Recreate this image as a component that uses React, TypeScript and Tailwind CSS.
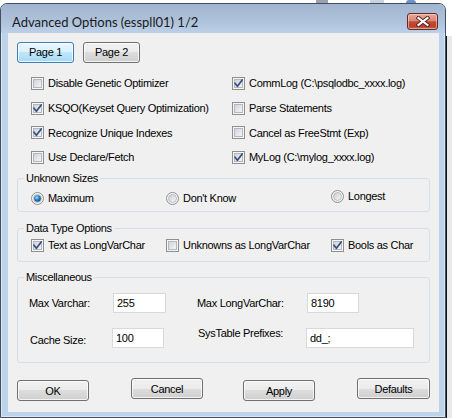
import React from 'react';

const ui = "font-['Liberation_Sans',Arial,sans-serif] text-[11px] tracking-[-0.3px] text-black";

const CheckBox: React.FC<{ checked?: boolean }> = ({ checked }) => (
  <svg width="13" height="13" viewBox="0 0 13 13" className="shrink-0">
    <defs>
      <linearGradient id="cbFill" x1="0" y1="0" x2="1" y2="1">
        <stop offset="0" stopColor="#cdd1d7" />
        <stop offset="1" stopColor="#f7f7f7" />
      </linearGradient>
    </defs>
    <rect x="0.5" y="0.5" width="12" height="12" fill="#f6f6f6" stroke="#8e8f8f" />
    <rect x="2.5" y="2.5" width="8" height="8" fill="url(#cbFill)" stroke="#b4b8be" />
    {checked && (
      <path d="M3 6.3 L5.4 9.2 L10.2 3" fill="none" stroke="#3b5185" strokeWidth="1.8" strokeLinecap="round" strokeLinejoin="round" />
    )}
  </svg>
);

const Radio: React.FC<{ checked?: boolean }> = ({ checked }) => (
  <svg width="13" height="13" viewBox="0 0 13 13" className="shrink-0">
    <defs>
      <linearGradient id="rbFill" x1="0" y1="0" x2="1" y2="1">
        <stop offset="0" stopColor="#c9ced4" />
        <stop offset="1" stopColor="#f8f8f8" />
      </linearGradient>
      <radialGradient id="rbDot" cx="0.4" cy="0.35" r="0.7">
        <stop offset="0" stopColor="#a8e2fb" />
        <stop offset="0.45" stopColor="#2f8bd0" />
        <stop offset="1" stopColor="#0f3f74" />
      </radialGradient>
    </defs>
    <circle cx="6.5" cy="6.5" r="6" fill="#f6f6f6" stroke="#8e8f8f" />
    <circle cx="6.5" cy="6.5" r="4" fill="url(#rbFill)" stroke="#b9bdc2" />
    {checked && <circle cx="6.5" cy="6.5" r="3.3" fill="url(#rbDot)" />}
  </svg>
);

const Opt: React.FC<{ label: string; checked?: boolean }> = ({ label, checked }) => (
  <div className="flex items-center gap-[4px] h-[13px] whitespace-nowrap">
    <CheckBox checked={checked} />
    <span>{label}</span>
  </div>
);

const RadioOpt: React.FC<{ label: string; checked?: boolean; className?: string }> = ({ label, checked, className }) => (
  <div className={`flex items-center gap-[4px] h-[13px] whitespace-nowrap ${className ?? ''}`}>
    <Radio checked={checked} />
    <span>{label}</span>
  </div>
);

const Button: React.FC<{ children: React.ReactNode; className?: string; hot?: boolean }> = ({ children, className, hot }) => (
  <div
    className={`flex items-center justify-center h-[21px] rounded-[3px] border shadow-[inset_0_0_0_1px_rgba(255,255,255,0.75)] ${
      hot
        ? 'border-[#3c7fb1] bg-[linear-gradient(to_bottom,#eaf6fd_0%,#d9f0fc_50%,#bee6fd_50%,#a7d9f5_100%)]'
        : 'border-[#707070] bg-[linear-gradient(to_bottom,#f2f2f2_0%,#ebebeb_50%,#dddddd_50%,#cfcfcf_100%)]'
    } ${className ?? ''}`}
  >
    {children}
  </div>
);

const TextBox: React.FC<{ value: string; className?: string }> = ({ value, className }) => (
  <div className={`h-[20px] bg-white border border-[#d6d9dd] flex items-center pl-[3px] ${className ?? ''}`}>{value}</div>
);

const Group: React.FC<{ title: string; className?: string; children: React.ReactNode }> = ({ title, className, children }) => (
  <fieldset className={`mx-[9px] border border-[#d5dfe5] rounded-[3px] ${className ?? ''}`}>
    <legend className="ml-[6px] px-[2px] leading-[13px]">{title}</legend>
    {children}
  </fieldset>
);

export default function App() {
  return (
    <div className={`w-[452px] h-[418px] bg-white overflow-hidden ${ui}`}>
      <div className="h-[3px] flex">
        <div className="ml-[316px] w-[12px] bg-[#9aa3ad]" />
        <div className="ml-[42px] w-[14px] bg-[#c9d3de]" />
        <div className="ml-[22px] w-[10px] bg-[#6f90c9] rounded-t-full" />
      </div>
      <div className="flex">
        <div className="w-[446px] h-[415px] flex flex-col rounded-t-[7px] border border-[#3f5064] bg-[#bcd3ea] shadow-[inset_0_0_0_1px_rgba(255,255,255,0.45)] overflow-hidden">
          {/* title bar */}
          <div className="h-[29px] shrink-0 flex items-start bg-[linear-gradient(to_bottom,#a1b5cf_0%,#aec2da_60%,#bcd1e9_100%)]">
            <div className="pl-[11px] pt-[11px] font-['Lato',sans-serif] text-[13px] leading-[15px] tracking-[0px] text-[#1b1b1b]">
              Advanced Options (esspll01) 1/2
            </div>
            <div className="ml-auto mr-[7px] mt-[9px] w-[31px] h-[17px] rounded-[3px] border border-[#5e2b22] shadow-[inset_0_0_0_1px_rgba(255,220,210,0.55)] bg-[linear-gradient(to_bottom,#e9a899_0%,#d98676_45%,#c54a36_52%,#b8402c_80%,#c9604a_100%)] flex items-center justify-center">
              <svg width="14" height="11" viewBox="0 0 14 11">
                <path d="M2.5 2 L11.5 9 M11.5 2 L2.5 9" stroke="#4a2019" strokeWidth="4" strokeLinecap="square" />
                <path d="M2.5 2 L11.5 9 M11.5 2 L2.5 9" stroke="#ffffff" strokeWidth="2.2" strokeLinecap="square" />
              </svg>
            </div>
          </div>

          {/* client */}
          <div className="ml-[7px] mr-[6px] h-[379px] bg-[#f0f0f0] pt-[9px]">
            <div className="flex gap-[9px] pl-[9px]">
              <Button hot className="w-[57px]">Page 1</Button>
              <Button className="w-[57px]">Page 2</Button>
            </div>

            <div className="mt-[14px] pl-[23px] grid grid-cols-[201px_1fr] gap-y-[11.67px]">
              <Opt label="Disable Genetic Optimizer" />
              <Opt label="CommLog (C:\psqlodbc_xxxx.log)" checked />
              <Opt label="KSQO(Keyset Query Optimization)" checked />
              <Opt label="Parse Statements" />
              <Opt label="Recognize Unique Indexes" checked />
              <Opt label="Cancel as FreeStmt (Exp)" />
              <Opt label="Use Declare/Fetch" />
              <Opt label="MyLog (C:\mylog_xxxx.log)" checked />
            </div>

            <Group title="Unknown Sizes" className="mt-[8px]">
              <div className="pl-[13px] pt-[6px] pb-[6px] grid grid-cols-[135px_165px_1fr] items-start">
                <RadioOpt label="Maximum" checked className="mt-[1px]" />
                <RadioOpt label="Don't Know" className="mt-[1px]" />
                <RadioOpt label="Longest" className="-mt-[1px]" />
              </div>
            </Group>

            <Group title="Data Type Options" className="mt-[10px]">
              <div className="pl-[13px] pt-[4px] pb-[9px] grid grid-cols-[135px_165px_1fr]">
                <Opt label="Text as LongVarChar" checked />
                <Opt label="Unknowns as LongVarChar" />
                <Opt label="Bools as Char" checked />
              </div>
            </Group>

            <Group title="Miscellaneous" className="mt-[9px]">
              <div className="pt-[9px] pb-[14px] flex flex-col gap-[15px]">
                <div className="flex items-center pl-[11px]">
                  <span className="w-[84px]">Max Varchar:</span>
                  <TextBox value="255" className="w-[53px]" />
                  <span className="ml-[31px] w-[110px]">Max LongVarChar:</span>
                  <TextBox value="8190" className="w-[52px]" />
                </div>
                <div className="flex items-start pl-[12px]">
                  <span className="w-[82px] mt-[4px]">Cache Size:</span>
                  <TextBox value="100" className="w-[52px]" />
                  <span className="ml-[34px] w-[108px] -mt-[3px]">SysTable Prefixes:</span>
                  <TextBox value="dd_;" className="w-[108px]" />
                </div>
              </div>
            </Group>

            <div className="mt-[15px] pl-[9px] flex items-start">
              <Button className="w-[72px] mt-[2px]">OK</Button>
              <Button className="w-[72px] ml-[42px]">Cancel</Button>
              <Button className="w-[72px] ml-[40px] mt-[2px]">Apply</Button>
              <Button className="w-[73px] ml-[42px]">Defaults</Button>
            </div>
          </div>
        </div>
        <div className="w-[6px] h-[415px] flex flex-col">
          <div className="h-[33px] bg-white" />
          <div className="flex-1 bg-[#e9e9e9] border-l border-[#151515]" />
        </div>
      </div>
    </div>
  );
}
